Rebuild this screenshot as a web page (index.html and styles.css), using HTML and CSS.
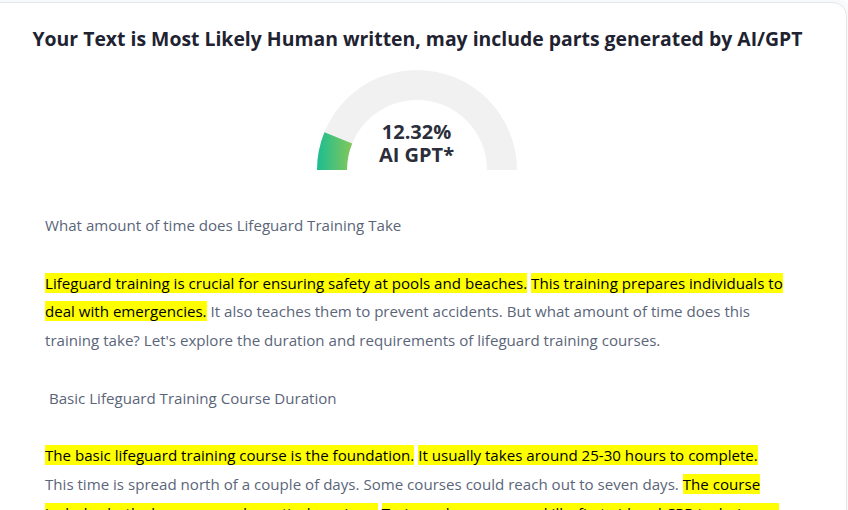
FILE: index.html
```html
<!DOCTYPE html>
<html lang="en">
<head>
 <meta charset="UTF-8">
 <meta name="viewport" content="width=device-width, initial-scale=1.0">
 <title>AI Content Detector - Result</title>
 <link rel="stylesheet" href="styles.css">
</head>
<body>
 <div class="card">
  <div class="result-title">Your Text is Most Likely Human written, may include parts generated by AI/GPT</div>

  <div class="gauge">
   <svg class="gauge-arc" width="200" height="100" viewBox="0 0 200 100">
    <defs>
     <linearGradient id="gaugeFill" x1="0" y1="0" x2="1" y2="0">
      <stop offset="0" stop-color="#1bbd92"/>
      <stop offset="1" stop-color="#84c75a"/>
     </linearGradient>
    </defs>
    <path d="M0 100 A100 100 0 0 1 200 100 L170 100 A70 70 0 0 0 30 100 Z" fill="#f1f1f1"/>
    <path d="M0 100 A100 100 0 0 1 7.4 62.25 L35.18 73.58 A70 70 0 0 0 30 100 Z" fill="url(#gaugeFill)"/>
   </svg>
   <div class="gauge-label">12.32%<br>AI GPT*</div>
  </div>

  <div class="result-text">
   <p>What amount of time does Lifeguard Training Take</p>
   <p><span class="hl">Lifeguard training is crucial for ensuring safety at pools and beaches.</span> <span class="hl">This training prepares individuals to deal with emergencies.</span> It also teaches them to prevent accidents. But what amount of time does this training take? Let's explore the duration and requirements of lifeguard training courses.</p>
   <p>&nbsp;Basic Lifeguard Training Course Duration</p>
   <p><span class="hl">The basic lifeguard training course is the foundation.</span> <span class="hl">It usually takes around 25-30 hours to complete.</span> This time is spread north of a couple of days. Some courses could reach out to seven days. <span class="hl">The course includes both classroom and practical sessions.</span> <span class="hl">Trainees learn rescue skills, first aid and CPR techniques.</span> Most programs end with a written and practical test.</p>
  </div>
 </div>
</body>
</html>
```
FILE: styles.css
```css
body {
margin: 0;
background-color: #ffffff;
font-family: "Open Sans", "Noto Sans", sans-serif;
overflow: hidden;
}

.card {
margin: 2px 1px 0 -20px;
padding: 22px 58px 0 64px;
background-color: #ffffff;
border: 1px solid #e4e7ee;
border-radius: 14px;
box-shadow: 0 0 14px rgba(30, 40, 60, 0.07);
}

.result-title {
margin: 0 -22px 0 -20px;
text-align: center;
color: #1f2331;
font-size: 19.4px;
font-weight: 700;
line-height: 28px;
white-space: nowrap;
}

.gauge {
position: relative;
width: 200px;
height: 100px;
margin: 17px auto 0;
}

.gauge-arc {
display: block;
}

.gauge-label {
position: absolute;
left: 0;
right: 0;
bottom: 4px;
text-align: center;
color: #2b2e3a;
font-size: 20px;
font-weight: 700;
line-height: 23px;
}

.result-text {
margin-top: 41px;
color: #5b6579;
font-size: 15.1px;
line-height: 28.8px;
}

.result-text p {
margin: 0 0 28.8px;
}

.hl {
background-color: #ffff00;
color: #000000;
}
```
